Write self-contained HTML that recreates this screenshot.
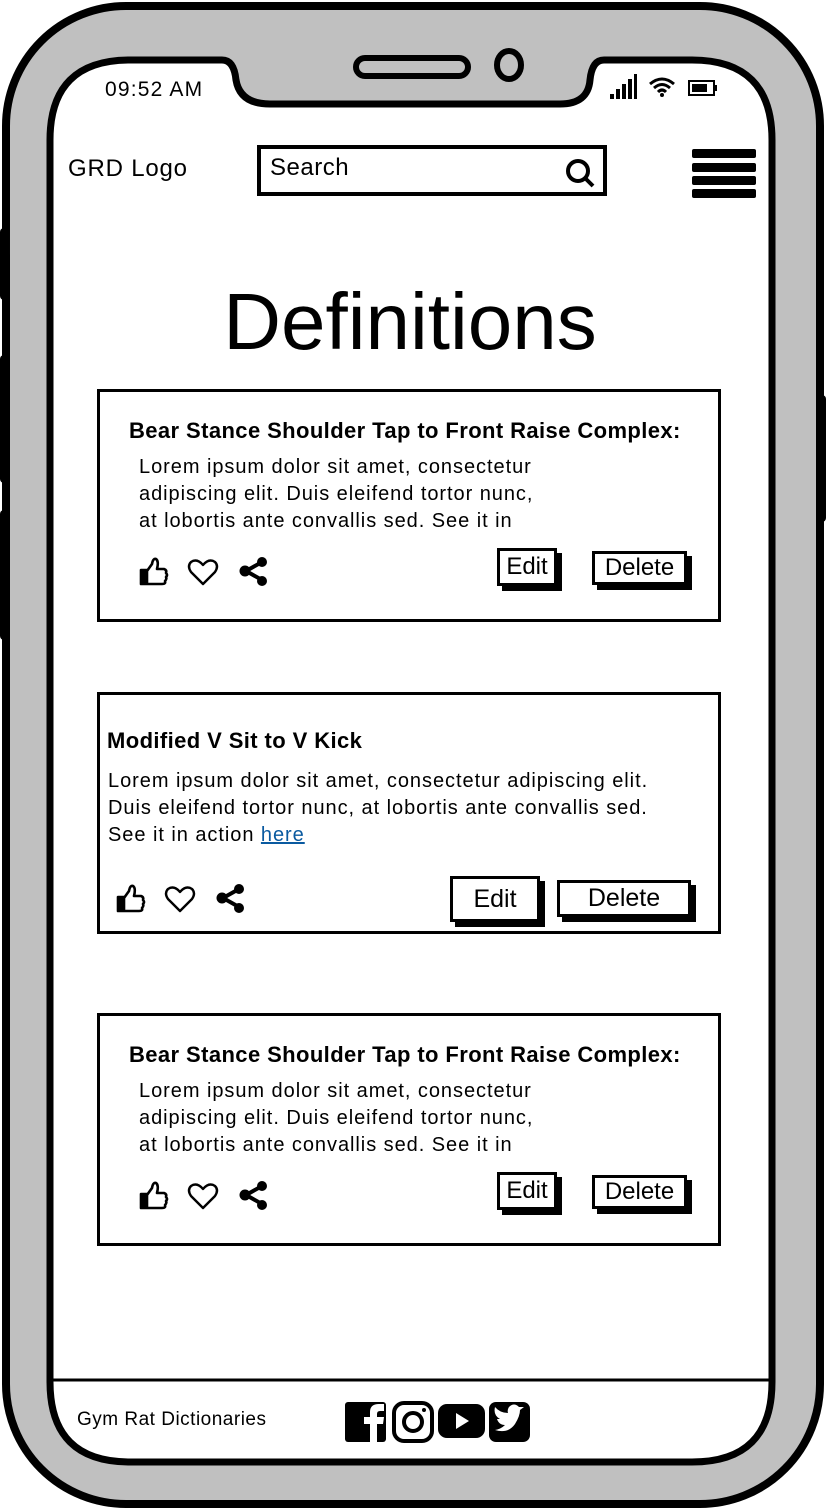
<!DOCTYPE html>
<html><head><meta charset="utf-8"><style>
body{margin:0;width:826px;height:1510px;position:relative;background:#fff;font-family:"Liberation Sans",sans-serif;overflow:hidden}
.a{position:absolute;white-space:nowrap;color:#000}
.t{font-weight:bold;font-size:22px;letter-spacing:0.4px}
.b{font-size:20px;line-height:27px;letter-spacing:0.95px}
.card{position:absolute;border:3px solid #000;background:#fff;box-sizing:border-box}
.btn{position:absolute;border:3px solid #000;background:#fff;box-shadow:5px 5px 0 #000;box-sizing:border-box;text-align:center;font-size:24px}
</style></head><body>
<svg width="826" height="1510" style="position:absolute;left:0;top:0">
<rect x="0" y="228" width="12" height="72" rx="4" fill="#000"/>
<rect x="0" y="355" width="12" height="128" rx="4" fill="#000"/>
<rect x="0" y="510" width="12" height="130" rx="4" fill="#000"/>
<rect x="814" y="395" width="12" height="127" rx="4" fill="#000"/>
<rect x="6" y="6" width="814" height="1498" rx="120" fill="#c0c0c0" stroke="#000" stroke-width="8"/>
<path d="M130 60 H222 Q234 60 236 80 Q240 104 270 104 H560 Q588 104 590 80 Q592 60 604 60 H692 Q772 60 772 140 V1382 Q772 1462 692 1462 H130 Q50 1462 50 1382 V140 Q50 60 130 60 Z" fill="#fff" stroke="#000" stroke-width="7"/>
<rect x="356" y="58" width="112" height="18" rx="9" fill="none" stroke="#000" stroke-width="6"/>
<ellipse cx="509" cy="65" rx="12" ry="14" fill="none" stroke="#000" stroke-width="6"/>
<rect x="610" y="94" width="4" height="5" fill="#000"/><rect x="616" y="89" width="4" height="10" fill="#000"/><rect x="622" y="84" width="4" height="15" fill="#000"/><rect x="628" y="79" width="4" height="20" fill="#000"/><rect x="634" y="74" width="3" height="25" fill="#000"/>
<path d="M650 84 Q662 74 674 84 M654 88 Q662 81 670 88 M658 92 Q662 88 666 92" stroke="#000" stroke-width="3" fill="none"/><circle cx="662" cy="95" r="2" fill="#000"/>
<rect x="689" y="81" width="25" height="14" fill="none" stroke="#000" stroke-width="2"/><rect x="692" y="84" width="15" height="8" fill="#000"/><rect x="714" y="85" width="3" height="6" fill="#000"/>
<rect x="259" y="147" width="346" height="47" fill="none" stroke="#000" stroke-width="4"/>
<circle cx="578" cy="171" r="10" fill="none" stroke="#000" stroke-width="4"/><path d="M585 178 L593 186" stroke="#000" stroke-width="4"/>
<rect x="692" y="149" width="64" height="9" rx="2" fill="#000"/><rect x="692" y="163" width="64" height="9" rx="2" fill="#000"/><rect x="692" y="176" width="64" height="9" rx="2" fill="#000"/><rect x="692" y="189" width="64" height="9" rx="2" fill="#000"/>
<path d="M50 1380 H770" stroke="#000" stroke-width="3"/>
<rect x="345" y="1402" width="41" height="40" rx="3" fill="#000"/>
<path d="M370 1442 V1424 H364 V1417 H370 V1412 Q370 1404 379 1404 H384 V1411 H380 Q377 1411 377 1414 V1417 H384 L383 1424 H377 V1442 Z" fill="#fff"/>
<rect x="394" y="1403" width="38" height="38" rx="10" fill="none" stroke="#000" stroke-width="4"/><circle cx="413" cy="1422" r="9" fill="none" stroke="#000" stroke-width="4"/><circle cx="424" cy="1410" r="2" fill="#000"/>
<rect x="438" y="1404" width="47" height="34" rx="9" fill="#000"/><path d="M456 1413 L469 1421 L456 1429 Z" fill="#fff"/>
<rect x="489" y="1402" width="41" height="40" rx="7" fill="#000"/><path d="M495 1430 Q508 1434 515 1424 Q520 1416 520 1410 L524 1407 L519 1407 Q514 1402 509 1407 Q507 1410 508 1413 Q500 1413 495 1407 Q493 1415 500 1419 L497 1419 Q499 1425 505 1425 Q501 1429 495 1430 Z" fill="#fff"/>
</svg>
<div class="a" style="left:105px;top:78px;font-size:21px;letter-spacing:1.2px">09:52 AM</div>
<div class="a" style="left:68px;top:155px;font-size:24px;letter-spacing:0.8px">GRD Logo</div>
<div class="a" style="left:270px;top:154px;font-size:24px;letter-spacing:0.5px">Search</div>
<div class="a" style="width:826px;text-align:center;top:276px;font-size:80px;left:-3px">Definitions</div>

<div class="card" style="left:97px;top:389px;width:624px;height:233px"></div>
<div class="a t" style="left:129px;top:418px">Bear Stance Shoulder Tap to Front Raise Complex:</div>
<div class="a b" style="left:139px;top:454px">Lorem ipsum dolor sit amet, consectetur<br>adipiscing elit. Duis eleifend tortor nunc,<br>at lobortis ante convallis sed. See it in</div>
<div class="btn" style="left:497px;top:548px;width:60px;height:38px;line-height:32px">Edit</div>
<div class="btn" style="left:592px;top:551px;width:95px;height:34px;line-height:28px">Delete</div>

<div class="card" style="left:97px;top:692px;width:624px;height:242px"></div>
<div class="a t" style="left:107px;top:728px">Modified V Sit to V Kick</div>
<div class="a b" style="left:108px;top:768px">Lorem ipsum dolor sit amet, consectetur adipiscing elit.<br>Duis eleifend tortor nunc, at lobortis ante convallis sed.<br>See it in action <span style="color:#0a5aa0;text-decoration:underline">here</span></div>
<div class="btn" style="left:450px;top:876px;width:90px;height:46px;line-height:40px;font-size:25px">Edit</div>
<div class="btn" style="left:557px;top:880px;width:134px;height:37px;line-height:31px;font-size:25px">Delete</div>

<div class="card" style="left:97px;top:1013px;width:624px;height:233px"></div>
<div class="a t" style="left:129px;top:1042px">Bear Stance Shoulder Tap to Front Raise Complex:</div>
<div class="a b" style="left:139px;top:1078px">Lorem ipsum dolor sit amet, consectetur<br>adipiscing elit. Duis eleifend tortor nunc,<br>at lobortis ante convallis sed. See it in</div>
<div class="btn" style="left:497px;top:1172px;width:60px;height:38px;line-height:32px">Edit</div>
<div class="btn" style="left:592px;top:1175px;width:95px;height:34px;line-height:28px">Delete</div>

<svg width="826" height="1510" style="position:absolute;left:0;top:0">
<defs>
<g id="ic">
<path d="M2 12 H8 V26 H2 Z M8 13 L13 6 Q14 0 17 1 Q20 3 18 11 H25 Q28 12 27 15 Q29 17 27 19 Q28 21 26 23 Q27 26 23 26 H8" fill="none" stroke="#000" stroke-width="2.6" stroke-linejoin="round"/>
<rect x="2" y="12" width="6" height="14" fill="#000"/>
<path d="M64 26 L52 14 Q48 8 52 4 Q58 0 64 7 Q70 0 76 4 Q80 8 76 14 Z" fill="none" stroke="#000" stroke-width="2.4" stroke-linejoin="round"/>
<path d="M123 4 L107 13 L123 22" stroke="#000" stroke-width="4" fill="none"/>
<circle cx="123" cy="4" r="5" fill="#000"/><circle cx="106" cy="13" r="5.5" fill="#000"/><circle cx="123" cy="23" r="5" fill="#000"/>
</g>
</defs>
<use href="#ic" x="139" y="558"/>
<use href="#ic" x="116" y="885"/>
<use href="#ic" x="139" y="1182"/>
</svg>
<div class="a" style="left:77px;top:1409px;font-size:19px;letter-spacing:0.5px">Gym Rat Dictionaries</div>
</body></html>
